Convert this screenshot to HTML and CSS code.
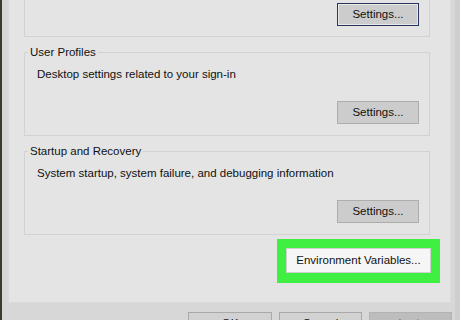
FILE: index.html
```html
<!DOCTYPE html>
<html>
<head>
<meta charset="utf-8">
<link rel="stylesheet" href="styles.css">
</head>
<body>
<div class="dialog">
  <div class="page">
    <fieldset class="group group-first">
      <div class="row"><button class="btn focused">Settings...</button></div>
    </fieldset>
    <fieldset class="group">
      <legend>User Profiles</legend>
      <div class="desc">Desktop settings related to your sign-in</div>
      <div class="row"><button class="btn">Settings...</button></div>
    </fieldset>
    <fieldset class="group">
      <legend>Startup and Recovery</legend>
      <div class="desc">System startup, system failure, and debugging information</div>
      <div class="row"><button class="btn">Settings...</button></div>
    </fieldset>
    <div class="highlight">
      <button class="btn env">Environment Variables...</button>
    </div>
  </div>
  <div class="footer">
    <button class="btn foot ok">OK</button>
    <button class="btn foot cancel">Cancel</button>
    <button class="btn foot apply">Apply</button>
  </div>
</div>
</body>
</html>
```
FILE: styles.css
```css
html, body {
  margin: 0;
  padding: 0;
}
body {
  width: 460px;
  height: 320px;
  overflow: hidden;
  background: #d7d7d7;
  font-family: "Liberation Sans", Arial, sans-serif;
  font-size: 11.5px;
  color: #111;
}
.dialog {
  height: 320px;
  box-sizing: border-box;
  border-left: 2px solid #3a3a30;
  border-right: 5px solid #cecece;
  padding: 0 3px 0 6px;
  display: flex;
  flex-direction: column;
  overflow: hidden;
}
.page {
  width: 443px;
  height: 333px;
  flex: none;
  margin-top: -30px;
  box-sizing: border-box;
  background: #e4e4e4;
  border: 1px solid #dadada;
  padding: 0 10px 0 15px;
  display: flex;
  flex-direction: column;
}
.group {
  margin: 0 10px 8px 0;
  padding: 7px 11px 11px 11px;
  border: 1px solid #d2d2d2;
  min-width: 0;
}
.group-first {
  padding-top: 31px;
  padding-bottom: 10px;
}
.group legend {
  font-size: 11.5px;
  line-height: 14px;
  height: 14px;
  padding: 0 2px;
  margin-left: -8px;
  color: #111;
}
.desc {
  line-height: 16px;
  height: 16px;
  padding-left: 1px;
}
.row {
  display: flex;
  justify-content: flex-end;
  margin-right: -1px;
}
.group .desc + .row {
  margin-top: 19px;
}
.btn {
  font-family: "Liberation Sans", Arial, sans-serif;
  font-size: 11.5px;
  color: #111;
  height: 23px;
  width: 82px;
  box-sizing: border-box;
  background: #cccccc;
  border: 1px solid #adadad;
  padding: 0;
  margin: 0;
  line-height: 21px;
  text-align: center;
}
.btn.focused {
  border: 1px solid #25355c;
  box-shadow: inset 0 0 0 1px #e9e9e9;
}
.highlight {
  align-self: flex-end;
  margin-top: -4px;
  padding: 9px 9px 10px 9px;
  background: #3ff043;
  display: flex;
}
.btn.env {
  width: 145px;
  height: 25px;
  background: #f6f6f6;
  border: 1px solid #cfcfcf;
  line-height: 23px;
}
.footer {
  margin-top: 9px;
  display: flex;
  justify-content: flex-end;
  gap: 7px;
}
.btn.foot {
  width: 83px;
  height: 23px;
  background: #d2d2d2;
  border: 1px solid #a9a9a9;
  flex: none;
}
.btn.ok {
  width: 84px;
}
.btn.apply {
  background: #bdbdbd;
  border-color: #b3b3b3;
  color: #8a8a8a;
}
```
